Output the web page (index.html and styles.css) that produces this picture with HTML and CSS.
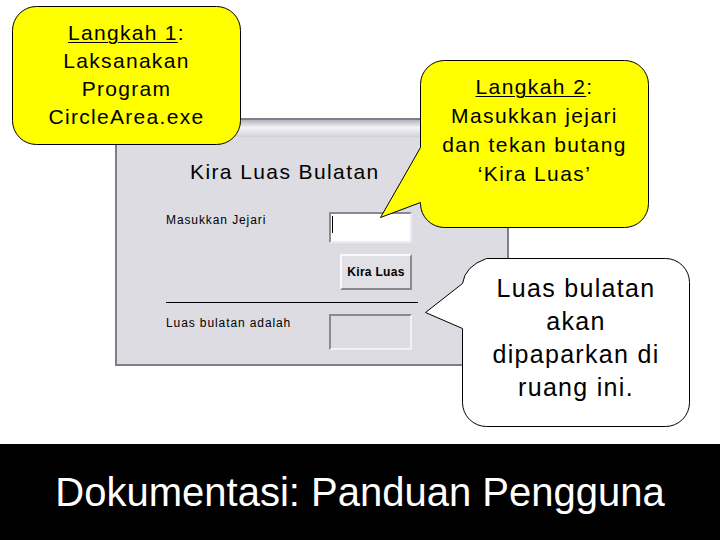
FILE: index.html
```html
<!DOCTYPE html>
<html>
<head>
<meta charset="utf-8">
<link rel="stylesheet" href="styles.css">
</head>
<body>
<div class="slide">
  <div class="stage">
    <div class="window">
      <div class="titlebar"></div>
      <div class="wbody">
        <div class="wtitle">Kira Luas Bulatan</div>
        <div class="row row-input">
          <div class="label">Masukkan Jejari</div>
          <div class="textbox"><span class="caret"></span></div>
        </div>
        <div class="btn">Kira Luas</div>
        <div class="rule"></div>
        <div class="row row-output">
          <div class="label label-out">Luas bulatan adalah</div>
          <div class="outbox"></div>
        </div>
      </div>
    </div>

    <div class="callout c1">
      <svg class="shape" width="229" height="139" viewBox="0 0 229 139">
        <path d="M24.5,0.5 H204.5 A24,24 0 0 1 228.5,24.5 V114.5 A24,24 0 0 1 204.5,138.5 H24.5 A24,24 0 0 1 0.5,114.5 V24.5 A24,24 0 0 1 24.5,0.5 Z" fill="#ffff00" stroke="#000" stroke-width="1"/>
      </svg>
      <div class="ctext t1"><span class="u">Langkah 1</span>:<br>Laksanakan<br>Program<br>CircleArea.exe</div>
    </div>

    <div class="callout c2">
      <svg class="shape" width="229" height="168" viewBox="0 0 229 168">
        <path d="M24.5,0.5 H204.5 A24,24 0 0 1 228.5,24.5 V143.5 A24,24 0 0 1 204.5,167.5 H24.5 A24,24 0 0 1 0.5,143.5 V142.5 L-39.5,157.5 Q-18,120 0.5,87.5 V24.5 A24,24 0 0 1 24.5,0.5 Z" fill="#ffff00" stroke="#000" stroke-width="1"/>
      </svg>
      <div class="ctext t2"><span class="u">Langkah 2</span>:<br>Masukkan jejari<br>dan tekan butang<br>‘Kira Luas’</div>
    </div>

    <div class="callout c3">
      <svg class="shape" width="228" height="169" viewBox="0 0 228 169">
        <path d="M24.5,0.5 H203.5 A24,24 0 0 1 227.5,24.5 V144.5 A24,24 0 0 1 203.5,168.5 H24.5 A24,24 0 0 1 0.5,144.5 V70.5 L-36.5,54.5 L0.5,25.5 Q3,8 24.5,0.5 Z" fill="#ffffff" stroke="#000" stroke-width="1"/>
      </svg>
      <div class="ctext t3">Luas bulatan<br>akan<br>dipaparkan di<br>ruang ini.</div>
    </div>
  </div>
  <div class="footer">Dokumentasi: Panduan Pengguna</div>
</div>
</body>
</html>
```
FILE: styles.css
```css
html, body {
  margin: 0;
  padding: 0;
  background: #ffffff;
}
.slide {
  width: 720px;
  height: 540px;
  overflow: hidden;
  font-family: "Liberation Sans", Arial, sans-serif;
  color: #000;
}
.stage {
  position: relative;
  height: 444px;
  overflow: hidden;
  padding-top: 118px;
  box-sizing: border-box;
}
.window {
  margin-left: 115px;
  width: 394px;
  height: 248px;
  box-sizing: border-box;
  border: 2px solid #7e7e88;
  background: #dcdce2;
}
.titlebar {
  height: 17px;
  background: linear-gradient(#b4b4be, #f4f4f7 45%, #e2e2e7 75%, #cfcfd6);
}
.wbody {
  padding-left: 49px;
}
.wtitle {
  margin-top: 23px;
  padding-left: 24px;
  font-size: 21px;
  line-height: 24px;
  letter-spacing: 1.4px;
}
.row {
  display: flex;
  align-items: flex-start;
}
.row-input {
  margin-top: 28px;
}
.label {
  width: 163px;
  font-size: 12px;
  line-height: 16px;
  letter-spacing: 0.9px;
}
.label-out {
  padding-top: 1px;
}
.textbox {
  width: 83px;
  height: 31px;
  box-sizing: border-box;
  border: 2px solid;
  border-color: #8a8a8e #ececee #ececee #8a8a8e;
  background: #ffffff;
}
.caret {
  display: block;
  width: 1px;
  height: 17px;
  margin: 2px 0 0 1px;
  background: #000;
}
.btn {
  margin: 11px 0 0 174px;
  width: 72px;
  height: 36px;
  box-sizing: border-box;
  border: 2px solid;
  border-color: #fafafa #8a8a8e #8a8a8e #fafafa;
  background: #e0e0e5;
  font-size: 12px;
  font-weight: bold;
  line-height: 32px;
  text-align: center;
  letter-spacing: 0.3px;
}
.rule {
  margin-top: 12px;
  width: 252px;
  height: 1px;
  background: #000;
}
.row-output {
  margin-top: 11px;
}
.outbox {
  width: 83px;
  height: 36px;
  box-sizing: border-box;
  border: 2px solid;
  border-color: #8a8a8e #f2f2f4 #f2f2f4 #8a8a8e;
  background: #dcdce2;
}
.callout {
  position: absolute;
}
.shape {
  position: absolute;
  left: 0;
  top: 0;
  overflow: visible;
}
.ctext {
  position: relative;
  text-align: center;
  white-space: nowrap;
}
.u {
  text-decoration: underline;
  text-decoration-thickness: 1px;
  text-underline-offset: 2px;
}
.c1 {
  left: 12px;
  top: 6px;
  width: 229px;
  height: 139px;
}
.t1 {
  padding-top: 13px;
  font-size: 21px;
  line-height: 28px;
  letter-spacing: 1.3px;
}
.c2 {
  left: 420px;
  top: 60px;
  width: 229px;
  height: 168px;
}
.t2 {
  padding-top: 12px;
  font-size: 21px;
  line-height: 29px;
  letter-spacing: 1.4px;
}
.c3 {
  left: 462px;
  top: 258px;
  width: 228px;
  height: 169px;
}
.t3 {
  padding-top: 14px;
  font-size: 25px;
  line-height: 33px;
  letter-spacing: 1.3px;
}
.footer {
  height: 96px;
  background: #000;
  color: #fff;
  font-size: 40px;
  line-height: 96px;
  text-align: center;
}
```
